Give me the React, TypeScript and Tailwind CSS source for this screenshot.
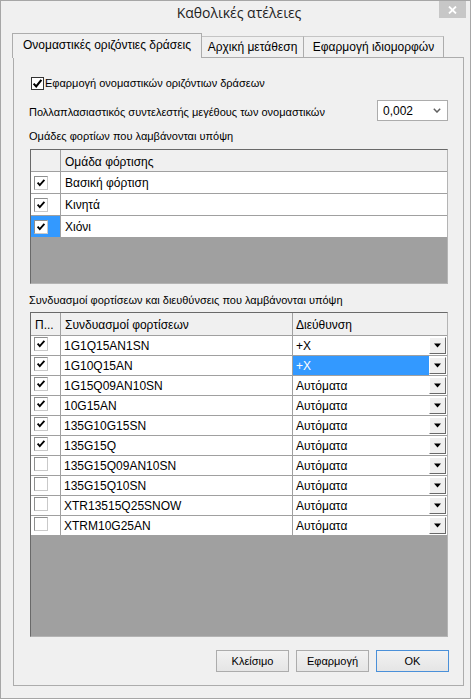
import React from 'react';

const FONT = "font-['Liberation_Sans',Arial,sans-serif]";

function TopCheck() {
  return (
    <div className="w-[13px] h-[13px] border border-[#333333] bg-white flex items-center justify-center shrink-0">
      <svg width="11" height="11" viewBox="0 0 11 11">
        <path d="M1.6 5.6 L4.2 8.4 L9.4 1.8" stroke="#000" strokeWidth="2.1" fill="none" />
      </svg>
    </div>
  );
}

function GridCheck({ checked }: { checked: boolean }) {
  return (
    <div className="w-[14px] h-[14px] border border-[#8e8f8f] border-r-[#c9c9c9] border-b-[#c9c9c9] bg-white flex items-center justify-center shrink-0">
      {checked && (
        <svg width="12" height="12" viewBox="0 0 12 12">
          <path d="M2.6 5.6 L4.8 8.2 L9.4 2.8" stroke="#000" strokeWidth="1.8" fill="none" />
        </svg>
      )}
    </div>
  );
}

function DropButton() {
  return (
    <div className="w-[17px] h-[17px] mt-[1px] mr-[1px] bg-[#f0f0f0] border border-white border-r-[#696969] border-b-[#696969] flex items-center justify-center shrink-0">
      <svg width="7" height="5" viewBox="0 0 7 5">
        <path d="M0 0.5 L7 0.5 L3.5 4.5 Z" fill="#000" />
      </svg>
    </div>
  );
}

function Button({ label, primary }: { label: string; primary?: boolean }) {
  return (
    <div
      className={
        primary
          ? 'w-[73px] h-[22px] border border-[#4a90d9] bg-gradient-to-b from-[#f2f2f2] to-[#e5e5e5] flex items-center justify-center text-[11px]'
          : 'w-[73px] h-[22px] border border-[#acacac] bg-gradient-to-b from-[#f2f2f2] to-[#e5e5e5] flex items-center justify-center text-[11px]'
      }
    >
      {label}
    </div>
  );
}

const groups = [
  { name: 'Βασική φόρτιση', sel: false },
  { name: 'Κινητά', sel: false },
  { name: 'Χιόνι', sel: true },
];

const combos: { name: string; dir: string; checked: boolean; sel?: boolean }[] = [
  { name: '1G1Q15AN1SN', dir: '+X', checked: true },
  { name: '1G10Q15AN', dir: '+X', checked: true, sel: true },
  { name: '1G15Q09AN10SN', dir: 'Αυτόματα', checked: true },
  { name: '10G15AN', dir: 'Αυτόματα', checked: true },
  { name: '135G10G15SN', dir: 'Αυτόματα', checked: true },
  { name: '135G15Q', dir: 'Αυτόματα', checked: true },
  { name: '135G15Q09AN10SN', dir: 'Αυτόματα', checked: false },
  { name: '135G15Q10SN', dir: 'Αυτόματα', checked: false },
  { name: 'XTR13515Q25SNOW', dir: 'Αυτόματα', checked: false },
  { name: 'XTRM10G25AN', dir: 'Αυτόματα', checked: false },
];

export default function App() {
  return (
    <div className={`w-[471px] h-[699px] bg-[#f0f0f0] border border-[#a6a6a6] flex flex-col text-black ${FONT}`}>
      {/* Title bar */}
      <div className="flex h-[28px] pl-[38px] shrink-0">
        <div className="flex-1 flex justify-center pt-[1px] font-['Open_Sans',sans-serif] text-[14px] leading-[22px] text-[#1e1e1e]">
          Καθολικές ατέλειες
        </div>
        <div className="w-[27px] h-[17px] mr-[4px] bg-[#c7c7c7] flex items-center justify-center">
          <svg width="9" height="8" viewBox="0 0 9 8">
            <path d="M1 0.5 L8 7.5 M8 0.5 L1 7.5" stroke="#fff" strokeWidth="1.8" />
          </svg>
        </div>
      </div>

      {/* Tabs */}
      <div className="flex items-end h-[28px] ml-[11px] shrink-0 text-[12px]">
        <div className="relative z-10 w-[190px] h-[25px] -mb-[1px] border border-b-0 border-[#acacac] bg-[#f0f0f0] flex items-center justify-center pb-[2px]">
          Ονομαστικές οριζόντιες δράσεις
        </div>
        <div className="w-[102px] h-[21px] border-t border-r border-[#c4c4c4] border-r-[#acacac] flex items-center justify-center">
          Αρχική μετάθεση
        </div>
        <div className="w-[140px] h-[21px] border-t border-r border-[#c4c4c4] border-r-[#acacac] flex items-center justify-center">
          Εφαρμογή ιδιομορφών
        </div>
      </div>

      {/* Tab panel */}
      <div className="ml-[12px] w-[451px] h-[629px] border border-[#acacac] bg-[#f0f0f0] pl-[16px] flex flex-col shrink-0">
        <div className="flex items-center h-[13px] mt-[19px] ml-[1px]">
          <TopCheck />
          <span className="ml-[1px] text-[11px] leading-[13px]">Εφαρμογή ονομαστικών οριζόντιων δράσεων</span>
        </div>

        <div className="flex items-center h-[21px] mt-[10px] w-[419px]">
          <span className="flex-1 text-[11px] -ml-[1px] pt-[3px]">
            Πολλαπλασιαστικός συντελεστής μεγέθους των ονομαστικών
          </span>
          <div className="w-[71px] h-[21px] mr-[1px] border border-[#acacac] bg-white flex items-center pl-[5px] pr-[6px] text-[12px]">
            <span>0,002</span>
            <svg className="ml-auto" width="8" height="5" viewBox="0 0 8 5">
              <path d="M0.8 0.8 L4 4 L7.2 0.8" stroke="#606060" strokeWidth="1.5" fill="none" />
            </svg>
          </div>
        </div>

        <div className="mt-[9px] h-[13px] leading-[13px] text-[11px] -ml-[1px]">Ομάδες φορτίων που λαμβάνονται υπόψη</div>

        {/* Grid 1 */}
        <div className="mt-[6px] w-[418px] h-[135px] flex flex-col bg-[#a0a0a0] border border-[#696969] border-r-[#b4b4b4] border-b-[#b4b4b4] text-[12px]">
          <div className="flex h-[22px] bg-[#f0f0f0] border-b border-[#a0a0a0] shrink-0">
            <div className="w-[30px] border-r border-[#a0a0a0]" />
            <div className="flex-1 flex items-center pl-[4px] pt-[2px]">Ομάδα φόρτισης</div>
          </div>
          {groups.map((g) => (
            <div key={g.name} className="flex h-[22px] bg-white border-b border-[#a0a0a0] shrink-0">
              <div className={g.sel ? 'w-[30px] border-r border-[#a0a0a0] bg-[#3399ff] pl-[3px] pt-[4px]' : 'w-[30px] border-r border-[#a0a0a0] pl-[3px] pt-[4px]'}>
                <GridCheck checked={true} />
              </div>
              <div className="flex-1 flex items-center pl-[4px] pt-[1px]">{g.name}</div>
            </div>
          ))}
          <div className="flex-1" />
        </div>

        <div className="mt-[10px] h-[13px] leading-[13px] text-[11px] -ml-[1px]">
          Συνδυασμοί φορτίσεων και διευθύνσεις που λαμβάνονται υπόψη
        </div>

        {/* Grid 2 */}
        <div className="mt-[5px] w-[418px] h-[325px] flex flex-col bg-[#a0a0a0] border border-[#696969] border-r-[#b4b4b4] border-b-[#b4b4b4] text-[12px]">
          <div className="flex h-[23px] bg-[#f0f0f0] border-b border-[#a0a0a0] shrink-0">
            <div className="w-[30px] border-r border-[#a0a0a0] flex items-center pl-[4px] pt-[2px]">Π...</div>
            <div className="w-[232px] border-r border-[#a0a0a0] flex items-center pl-[4px] pt-[2px]">Συνδυασμοί φορτίσεων</div>
            <div className="flex-1 flex items-center pl-[3px] pt-[2px]">Διεύθυνση</div>
          </div>
          {combos.map((c) => (
            <div key={c.name} className="flex h-[20px] bg-white border-b border-[#a0a0a0] shrink-0">
              <div className="w-[30px] border-r border-[#a0a0a0] pl-[3px] pt-[1px]">
                <GridCheck checked={c.checked} />
              </div>
              <div className="w-[232px] border-r border-[#a0a0a0] flex items-center pl-[3px] pt-[1px]">{c.name}</div>
              <div className="flex-1 flex">
                <div className={c.sel ? 'flex-1 flex items-center pl-[3px] pt-[1px] bg-[#3399ff] text-white' : 'flex-1 flex items-center pl-[3px] pt-[1px]'}>
                  {c.dir}
                </div>
                <DropButton />
              </div>
            </div>
          ))}
          <div className="flex-1" />
        </div>

        {/* Buttons */}
        <div className="mt-[13px] w-[419px] flex justify-end gap-[7px]">
          <Button label="Κλείσιμο" />
          <Button label="Εφαρμογή" />
          <Button label="OK" primary />
        </div>
      </div>
    </div>
  );
}
